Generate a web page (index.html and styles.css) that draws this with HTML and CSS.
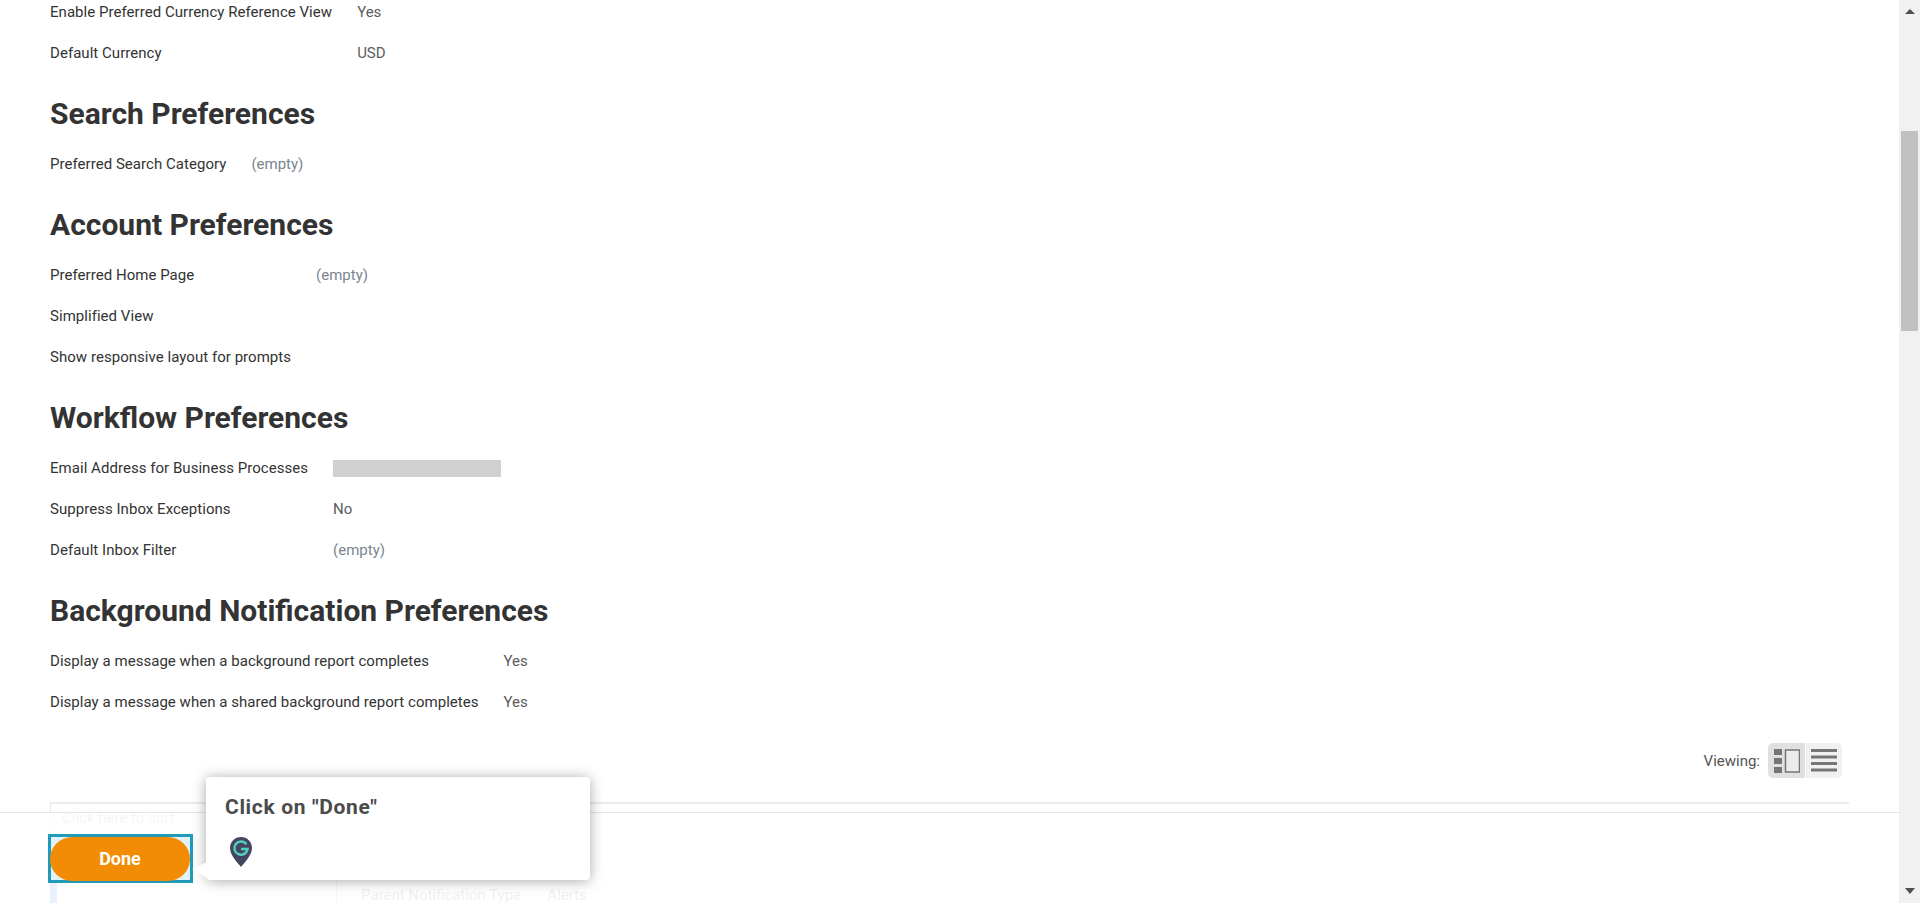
FILE: index.html
```html
<!DOCTYPE html>
<html lang="en">
<head>
<meta charset="utf-8">
<title>Preferences</title>
<link rel="stylesheet" href="styles.css">
</head>
<body>
<div class="app">
  <main class="content">
    <section class="fields">
      <div class="label">Enable Preferred Currency Reference View</div><div class="value">Yes</div>
      <div class="label">Default Currency</div><div class="value">USD</div>
    </section>
    <h2 class="heading">Search Preferences</h2>
    <section class="fields">
      <div class="label">Preferred Search Category</div><div class="value empty">(empty)</div>
    </section>
    <h2 class="heading">Account Preferences</h2>
    <section class="fields">
      <div class="label">Preferred Home Page</div><div class="value empty">(empty)</div>
      <div class="label">Simplified View</div><div class="value"></div>
      <div class="label">Show responsive layout for prompts</div><div class="value"></div>
    </section>
    <h2 class="heading">Workflow Preferences</h2>
    <section class="fields">
      <div class="label">Email Address for Business Processes</div><div class="value"><span class="redacted"></span></div>
      <div class="label">Suppress Inbox Exceptions</div><div class="value">No</div>
      <div class="label">Default Inbox Filter</div><div class="value empty">(empty)</div>
    </section>
    <h2 class="heading">Background Notification Preferences</h2>
    <section class="fields">
      <div class="label">Display a message when a background report completes</div><div class="value">Yes</div>
      <div class="label">Display a message when a shared background report completes</div><div class="value">Yes</div>
    </section>
    <div class="toolbar">
      <span class="viewing">Viewing:</span>
      <div class="toggle">
        <button class="seg seg-active" aria-label="Detail view">
          <svg width="26" height="24" viewBox="0 0 26 24"><path class="ic" d="M0 0h8v6H0zM0 9h8v6H0zM0 18h8v6H0z"/><rect class="ic-frame" x="11.5" y="1" width="14" height="22"/></svg>
        </button>
        <button class="seg" aria-label="List view">
          <svg width="26" height="24" viewBox="0 0 26 24"><path class="ic" d="M0 0h26v3H0zM0 6.500h26v3H0zM0 13h26v3H0zM0 19.500h26v3H0z"/></svg>
        </button>
      </div>
    </div>
    <div class="table">
      <div class="table-head">Click here to sort</div>
      <div class="table-body">
        <div class="table-side"></div>
        <div class="table-main">
          <div class="table-spacer"></div>
          <div class="table-detail"><span>Parent Notification Type</span><span>Alerts</span></div>
        </div>
      </div>
    </div>
  </main>
  <aside class="scrollbar">
    <span class="arrow arrow-up"></span>
    <span class="thumb"></span>
    <span class="arrow arrow-down"></span>
  </aside>
</div>
<div class="footer">
  <div class="focus-ring"><button class="done">Done</button></div>
</div>
<div class="tip">
  <span class="tip-arrow"></span>
  <div class="tip-title">Click on "Done"</div>
  <svg class="pin" width="22" height="30" viewBox="0 0 22 30"><path fill="#44465f" d="M11 0C4.900 0 0 4.900 0 11c0 7 7 14 11 19 4-5 11-12 11-19C22 4.900 17.100 0 11 0z"/><path fill="none" stroke="#4fd0bd" stroke-width="2.400" d="M16.300 7.200A6.600 6.600 0 1 0 17.500 12H11"/></svg>
</div>
</body>
</html>
```
FILE: styles.css
```css
* { box-sizing: border-box; }
html, body { margin: 0; height: 100%; overflow: hidden; background: #fff; }
body { font-family: Roboto, "Liberation Sans", sans-serif; font-size: 15px; color: #333; position: relative; }
.app { display: flex; height: 903px; }
.content { flex: 1; min-width: 0; padding: 0 50px; margin-top: -9px; }
.fields { display: grid; grid-template-columns: max-content 1fr; column-gap: 25px; grid-auto-rows: 41px; align-items: center; }
.label { font-weight: 400; letter-spacing: 0.040px; color: #333; }
.value { color: #5c5c5c; }
.empty { color: #7b858f; }
.redacted { display: block; width: 168px; height: 17px; margin-top: 1px; background: #d0d0d0; }
.heading { margin: 0; padding: 27px 0 15px; font-size: 30px; line-height: 28px; font-weight: 700; color: #333; }
.toolbar { display: flex; justify-content: flex-end; align-items: center; gap: 8px; margin-top: 21px; height: 35px; padding-right: 7px; }
.viewing { color: #555; }
.toggle { display: flex; gap: 1px; }
.seg { width: 36px; height: 35px; padding: 0; border: 0; background: #f0f0f0; display: flex; align-items: center; justify-content: center; border-radius: 0 5px 5px 0; }
.seg-active { width: 37px; background: #dfe0e0; border-radius: 5px 0 0 5px; }
.ic { fill: #757575; }
.ic-frame { fill: #ececec; stroke: #757575; stroke-width: 1.500; }
.table { margin-top: 24px; border-top: 2px solid #ebebeb; border-left: 1px solid #e8e8e8; }
.table-head { height: 30px; padding: 5px 11px; color: #bbb; border-bottom: 1px solid #eee; }
.table-body { display: flex; height: 70px; }
.table-side { width: 287px; flex: none; border-right: 1px solid #bcd; border-left: 7px solid #6ea6ea; margin-left: -1px; }
.table-main { flex: 1; }
.table-spacer { height: 22px; margin-right: 108px; border-bottom: 1px solid #eee; }
.table-detail { display: flex; gap: 26px; padding: 30px 24px 0; color: #999; }
.scrollbar { width: 21px; background: #f1f1f1; position: relative; display: flex; flex-direction: column; align-items: center; padding-top: 9px; flex: none; }
.thumb { width: 17px; height: 200px; margin-top: 117px; background: #c1c1c1; }
.arrow { width: 0; height: 0; border-left: 5px solid transparent; border-right: 5px solid transparent; }
.arrow-up { border-bottom: 5px solid #505050; }
.arrow-down { border-top: 6px solid #505050; margin-top: auto; margin-bottom: 9px; }
.footer { position: absolute; left: 0; right: 21px; top: 812px; bottom: 0; background: rgba(255,255,255,0.85); border-top: 1px solid #e6e6e6; padding: 21px 0 0 48px; }
.focus-ring { width: 145px; height: 49px; border: 3px solid #2199b8; background: #e3f2f6; }
.done { display: block; width: 140px; height: 44px; margin: 0 0 0 -1px; padding: 0 0 2px; border: 0; border-radius: 22px; background: #f28c05; color: #fff; font: 700 18px Roboto, sans-serif; }
.tip { position: absolute; left: 206px; top: 777px; width: 384px; height: 103px; background: #fff; border-radius: 4px; box-shadow: 0 1px 14px rgba(0,0,0,0.34); padding: 20px 19px; }
.tip-title { font: 700 21px Roboto, sans-serif; letter-spacing: 0.650px; color: #4b4b4b; line-height: 20px; }
.pin { display: block; margin: 20px 0 0 5px; }
.tip-arrow { position: absolute; left: -14px; top: 85px; width: 15px; height: 16px; background: #fff; clip-path: polygon(0 44%, 100% 0, 100% 100%); }
```
